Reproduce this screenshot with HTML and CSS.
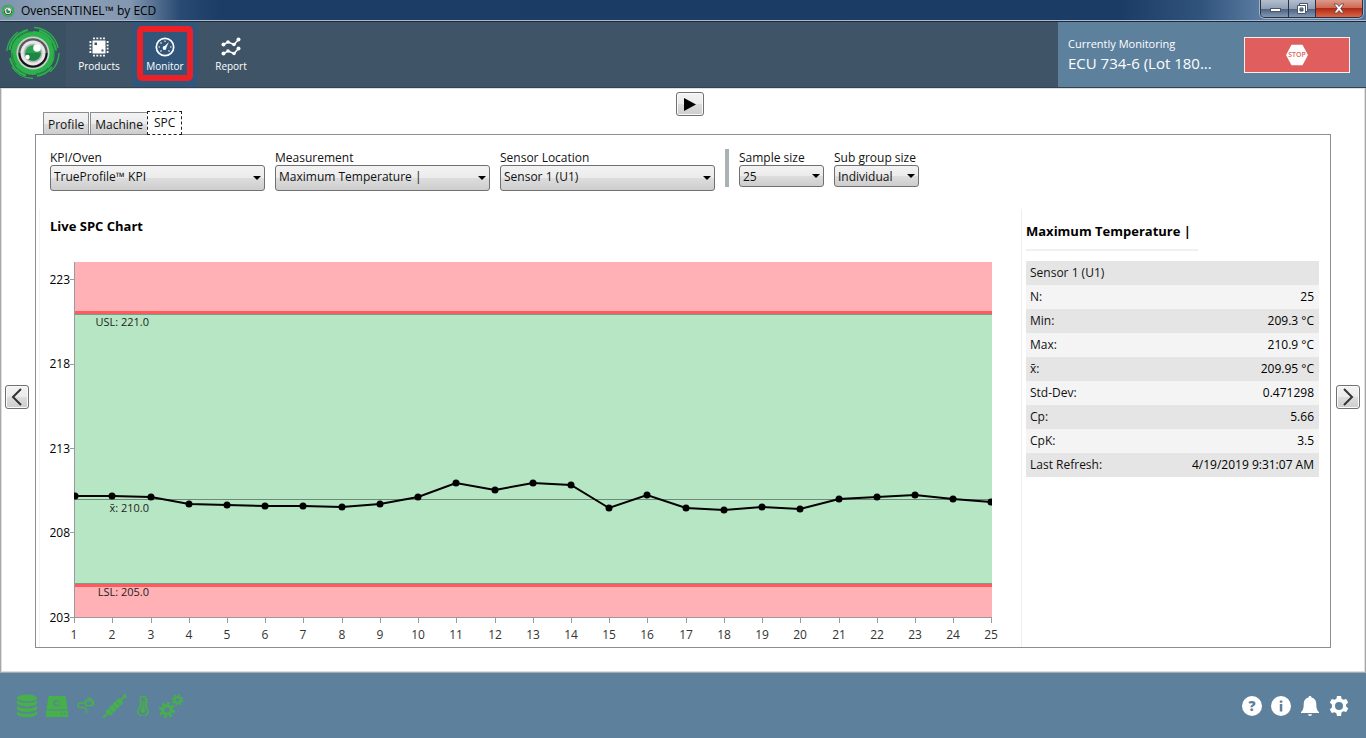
FILE: index.html
```html
<!DOCTYPE html>
<html lang="en">
<head>
<meta charset="utf-8">
<title>OvenSENTINEL™ by ECD</title>
<link rel="stylesheet" href="styles.css">
</head>
<body>
<div class="app">
  <header class="titlebar">
    <svg class="titlebar-icon" viewBox="0 0 54 54" aria-hidden="true"><use href="#logo"/></svg>
    <span class="titlebar-text">OvenSENTINEL™ by ECD</span>
    <div class="window-buttons">
      <button class="win-btn" aria-label="Minimize"><svg width="12" height="10" viewBox="0 0 12 10"><rect x="1.500" y="4.500" width="10" height="3" fill="#fff" stroke="#4a5568"/></svg></button>
      <button class="win-btn" aria-label="Restore"><svg width="14" height="12" viewBox="0 0 14 12"><path d="M4.500 .5h8v8h-2v-6h-6z" fill="#fff" stroke="#4a5568"/><path fill-rule="evenodd" d="M2.500 2.500h8v8h-8zM5 5v3h3V5z" fill="#fff" stroke="#4a5568"/></svg></button>
      <button class="win-btn win-close" aria-label="Close"><svg width="12" height="11" viewBox="0 0 12 11"><path d="M1 1h3l2 2.500L8 1h3L7.700 5.500 11 10H8L6 7.500 4 10H1l3.300-4.500z" fill="#fff" stroke="#5b4040" stroke-width=".8"/></svg></button>
    </div>
  </header>

  <div class="header">
    <div class="brand">
      <svg width="54" height="54" viewBox="0 0 54 54" role="img" aria-label="ECD">
        <defs>
          <g id="logo">
            <g fill="none" stroke="#2bb24a">
              <circle cx="27" cy="27" r="18.500" stroke-width="7"/>
              <path d="M28 1.500A25.500 25.500 0 0 1 52 22M53 27a26 26 0 0 1-9 19M27 52.500A25.500 25.500 0 0 1 6 41M.8 25A26 26 0 0 1 12 6" stroke-width="1.300"/>
              <path d="M33 4.500a23.500 23.500 0 0 1 17 20M46 41a23.500 23.500 0 0 1-15 9M20 49.500A23.500 23.500 0 0 1 4 32M3.500 24A23.500 23.500 0 0 1 22 4" stroke-width="2"/>
            </g>
            <g fill="none" stroke="#1e6f3a" stroke-width=".7"><path d="M12 12a21 21 0 0 1 15-6.500M46 17a21 21 0 0 1 2 15M10 39a21 21 0 0 1-4-12M30 48a21 21 0 0 0 12-6"/></g>
            <circle cx="27" cy="27" r="16.500" fill="#cfd1d1"/>
            <circle cx="27" cy="27" r="14.800" fill="#57595b"/>
            <path d="M12.500 27a14.500 14.500 0 0 0 29 0z" fill="#151617"/>
            <circle cx="27" cy="27" r="12.500" fill="#e6e8e8"/>
            <circle cx="27" cy="27" r="9.500" fill="#b4b8b9"/>
            <circle cx="27" cy="27" r="7.800" fill="#2aa253"/>
            <path d="M19.200 27a7.800 7.800 0 0 0 15.600 0z" fill="#1f8547"/>
            <circle cx="31" cy="22" r="3.800" fill="#fff"/>
            <circle cx="21.500" cy="31" r="2.200" fill="#fff"/>
          </g>
        </defs>
        <use href="#logo"/>
      </svg>
    </div>
    <nav class="nav">
      <button class="nav-item">
        <span class="nav-inner">
          <svg width="20" height="20" viewBox="0 0 20 20" aria-hidden="true"><path fill="#fff" fill-rule="evenodd" d="M3.500 3.500h13v13h-13zM5.500 5.500v2.500h2.500V5.500zM12.500 12.500v2h2v-2z"/><path stroke="#fff" stroke-width="1.800" d="M5 .5V2.300M8.300 .5V2.300M11.700 .5V2.300M15 .5V2.300M5 17.700v1.800M8.300 17.700v1.800M11.700 17.700v1.800M15 17.700v1.800M.5 5H2.300M.5 8.300H2.300M.5 11.700H2.300M.5 15H2.300M17.700 5h1.800M17.700 8.300h1.800M17.700 11.700h1.800M17.700 15h1.800"/></svg>
          <span>Products</span>
        </span>
      </button>
      <button class="nav-item nav-active" aria-current="page">
        <span class="nav-inner nav-marked">
          <svg width="20" height="20" viewBox="0 0 20 20" aria-hidden="true"><circle cx="10" cy="10" r="8.700" fill="none" stroke="#fff" stroke-width="1.700"/><path stroke="#fff" stroke-width="1.100" d="M10 3.500v1.500M5.500 5.500l1 1M3.500 10H5M15 10h1.500M5.500 14.500l1-1M14.500 14.500l-1-1"/><circle cx="9.500" cy="11" r="1.900" fill="#fff"/><path d="M8.500 10.200L14 5l-3.300 6.700z" fill="#fff"/></svg>
          <span>Monitor</span>
        </span>
      </button>
      <button class="nav-item">
        <span class="nav-inner">
          <svg width="20" height="20" viewBox="0 0 20 20" aria-hidden="true"><g fill="none" stroke="#fff" stroke-width="1.500"><path d="M2.500 7.500L7 5l6 2.500 4.500-5M2.500 16.500L7 14l6 2.500 4.500-5"/></g><g fill="#fff"><circle cx="2.500" cy="7.500" r="2"/><circle cx="7" cy="5" r="1.800"/><circle cx="13" cy="7.500" r="1.800"/><circle cx="17.500" cy="2.500" r="2"/><circle cx="2.500" cy="16.500" r="2"/><circle cx="7" cy="14" r="1.800"/><circle cx="13" cy="16.500" r="1.800"/><circle cx="17.500" cy="11.500" r="2"/></g></svg>
          <span>Report</span>
        </span>
      </button>
    </nav>
    <section class="monitoring">
      <div class="monitoring-text">
        <div class="monitoring-label">Currently Monitoring</div>
        <div class="monitoring-name">ECU 734-6 (Lot 180...</div>
      </div>
      <button class="stop-btn" aria-label="Stop">
        <svg width="22" height="22" viewBox="0 0 22 22"><path d="M5.500 .8h11L22 11l-5.500 10.200h-11L0 11z" fill="#fff"/><text x="11" y="13" class="stop-text">STOP</text></svg>
      </button>
    </section>
  </div>

  <main class="main">
    <button class="glass-btn play-btn" aria-label="Play"><svg width="14" height="14" viewBox="0 0 14 14"><path d="M1 1l12 6.500-12 6.500z"/></svg></button>
    <div class="tabs" role="tablist">
      <button class="tab" role="tab">Profile</button>
      <button class="tab" role="tab">Machine</button>
      <button class="tab tab-selected" role="tab" aria-selected="true">SPC</button>
    </div>
    <button class="glass-btn arrow-btn" aria-label="Previous"><svg width="12" height="18" viewBox="0 0 12 18"><path class="chevron" d="M10 1L2 9l8 8"/></svg></button>

    <section class="panel">
      <form class="filters">
        <div class="field">
          <label for="kpi">KPI/Oven</label>
          <div class="select-box"><select id="kpi" class="select"><option>TrueProfile™ KPI</option></select></div>
        </div>
        <div class="field">
          <label for="measurement">Measurement</label>
          <div class="select-box"><select id="measurement" class="select"><option>Maximum Temperature |</option></select></div>
        </div>
        <div class="field">
          <label for="sensor">Sensor Location</label>
          <div class="select-box"><select id="sensor" class="select"><option>Sensor 1 (U1)</option></select></div>
        </div>
        <div class="divider"></div>
        <div class="field field-small">
          <label for="sample">Sample size</label>
          <div class="select-box"><select id="sample" class="select"><option>25</option></select></div>
        </div>
        <div class="field field-small">
          <label for="subgroup">Sub group size</label>
          <div class="select-box"><select id="subgroup" class="select"><option>Individual</option></select></div>
        </div>
      </form>

      <div class="content">
        <div class="chart-col">
          <h2 class="chart-title">Live SPC Chart</h2>
          <svg class="chart" viewBox="0 0 952 386" role="img" aria-label="Live SPC Chart">
            <defs>
              <clipPath id="plot"><rect x="24" y="6" width="918" height="355"/></clipPath>
              <marker id="dot" viewBox="0 0 10 10" refX="5" refY="5" markerWidth="10" markerHeight="10" markerUnits="userSpaceOnUse"><circle cx="5" cy="5" r="3.500"/></marker>
            </defs>
            <rect x="24" y="6" width="918" height="355" fill="#ffb1b5"/>
            <rect x="24" y="57" width="918" height="271" fill="#b6e6c3"/>
            <rect x="24" y="55" width="918" height="3" fill="#ff5a5f"/>
            <rect x="24" y="58" width="918" height="1" fill="#74a083"/>
            <rect x="24" y="328" width="918" height="3" fill="#ff5a5f"/>
            <rect x="24" y="327" width="918" height="1" fill="#74a083"/>
            <path class="mean" d="M24 243.500H942"/>
            <path class="axis" d="M24.500 6V367M20 361.500H942M20 23.500h4M20 108.500h4M20 192.500h4M20 276.500h4M62.500 361v6M101.500 361v6M139.500 361v6M177.500 361v6M215.500 361v6M253.500 361v6M292.500 361v6M330.500 361v6M368.500 361v6M406.500 361v6M445.500 361v6M483.500 361v6M521.500 361v6M559.500 361v6M597.500 361v6M636.500 361v6M674.500 361v6M712.500 361v6M750.500 361v6M789.500 361v6M827.500 361v6M865.500 361v6M903.500 361v6M941.500 361v6"/>
            <g clip-path="url(#plot)">
              <polyline class="series" points="25,240 62,240 101,241 139,248 177,249 215,250 253,250 292,251 330,248 368,241 406,227 445,234 483,227 521,229 559,252 597,239 636,252 674,254 712,251 750,253 789,243 827,241 865,239 903,243 941,246"/>
            </g>
            <g class="y-labels">
              <text x="20" y="28">223</text><text x="20" y="112">218</text><text x="20" y="197">213</text><text x="20" y="281">208</text><text x="20" y="366">203</text>
            </g>
            <g class="line-labels">
              <text x="99" y="70">USL: 221.0</text><text x="99" y="256">x̄: 210.0</text><text x="99" y="340">LSL: 205.0</text>
            </g>
            <g class="x-labels">
              <text x="24" y="383">1</text><text x="62" y="383">2</text><text x="101" y="383">3</text><text x="139" y="383">4</text><text x="177" y="383">5</text><text x="215" y="383">6</text><text x="253" y="383">7</text><text x="292" y="383">8</text><text x="330" y="383">9</text><text x="368" y="383">10</text><text x="406" y="383">11</text><text x="445" y="383">12</text><text x="483" y="383">13</text><text x="521" y="383">14</text><text x="559" y="383">15</text><text x="597" y="383">16</text><text x="636" y="383">17</text><text x="674" y="383">18</text><text x="712" y="383">19</text><text x="750" y="383">20</text><text x="789" y="383">21</text><text x="827" y="383">22</text><text x="865" y="383">23</text><text x="903" y="383">24</text><text x="941" y="383">25</text>
            </g>
          </svg>
        </div>

        <aside class="stats">
          <h2 class="stats-title">Maximum Temperature |</h2>
          <div class="stats-rule"></div>
          <table class="stats-table">
            <tbody>
              <tr><th colspan="2" scope="colgroup">Sensor 1 (U1)</th></tr>
              <tr><th scope="row">N:</th><td>25</td></tr>
              <tr><th scope="row">Min:</th><td>209.3 °C</td></tr>
              <tr><th scope="row">Max:</th><td>210.9 °C</td></tr>
              <tr><th scope="row">x̄:</th><td>209.95 °C</td></tr>
              <tr><th scope="row">Std-Dev:</th><td>0.471298</td></tr>
              <tr><th scope="row">Cp:</th><td>5.66</td></tr>
              <tr><th scope="row">CpK:</th><td>3.5</td></tr>
              <tr><th scope="row">Last Refresh:</th><td>4/19/2019 9:31:07 AM</td></tr>
            </tbody>
          </table>
        </aside>
      </div>
    </section>

    <button class="glass-btn arrow-btn" aria-label="Next"><svg width="12" height="18" viewBox="0 0 12 18"><path class="chevron" d="M2 1l8 8-8 8"/></svg></button>
  </main>

  <footer class="footer">
    <div class="status-icons">
      <svg width="20" height="24" viewBox="0 0 20 24" aria-hidden="true"><ellipse cx="10" cy="4" rx="10" ry="3.600"/><path d="M0 6.200c3 3.400 17 3.400 20 0v3.600c-3 3.600-17 3.600-20 0zM0 11.800c3 3.400 17 3.400 20 0v3.400c-3 3.600-17 3.600-20 0zM0 17.200c3 3.400 17 3.400 20 0v3c-3 4-17 4-20 0z"/></svg>
      <svg width="22" height="22" viewBox="0 0 22 22" aria-hidden="true"><path d="M2.500 1h17l2 13.500H.5z"/><path fill-rule="evenodd" d="M0 15.500h22V22H0zM15 18v1.500h1.500V18zM18 18v1.500h1.500V18z"/><text class="drive-text" x="11" y="11">C:</text></svg>
      <svg width="17" height="17" viewBox="0 0 17 17" aria-hidden="true"><path class="cable" d="M8 6H3.500C.2 6 .2 10.500 3.500 10.500H6c3.500 0 3.500 2 3.500 6M8.700 3.500h6.600v5H8.700zM15.300 4.500h1v3h-1M11 3.500v-2h3v2"/></svg>
      <svg width="24" height="24" viewBox="0 0 24 24" aria-hidden="true"><path d="M2.500 17.500L16 4l4.500 4.500L7 22z"/><path stroke="#46b04a" stroke-width="2" d="M0 24l5-5M18 6l5-5M20.500 .8l2.700 2.700"/><path stroke="#5d809d" stroke-width="1" d="M6.500 15l3.500 3.500M10 11.500l3.500 3.500M13.500 8l3.500 3.500"/></svg>
      <svg width="14" height="20" viewBox="-1 0 14 20" aria-hidden="true"><path fill="none" stroke="#46b04a" stroke-width="1.600" d="M3.500 11V1h5v10a5 5 0 1 1-5 0z"/><circle cx="6" cy="14.500" r="2.400"/><path stroke="#46b04a" stroke-width="1.400" d="M6 5v8M8 3.500h3M8 6.500h3M8 9.500h3"/></svg>
      <svg width="25" height="24" viewBox="0 0 25 24" aria-hidden="true"><circle cx="8" cy="16" r="4.300" fill="none" stroke="#46b04a" stroke-width="3"/><circle cx="8" cy="16" r="6.800" fill="none" stroke="#46b04a" stroke-width="2.600" stroke-dasharray="2.700 2.640"/><circle cx="18.500" cy="6" r="3" fill="none" stroke="#46b04a" stroke-width="2"/><circle cx="18.500" cy="6" r="4.800" fill="none" stroke="#46b04a" stroke-width="2" stroke-dasharray="1.900 1.870"/></svg>
    </div>
    <div class="tools">
      <button class="tool" aria-label="Help"><svg width="20" height="20" viewBox="0 0 20 20"><circle cx="10" cy="10" r="10"/><text class="help-text" x="10" y="15">?</text></svg></button>
      <button class="tool" aria-label="Information"><svg width="20" height="20" viewBox="0 0 20 20"><circle cx="10" cy="10" r="10"/><path fill="#5d809d" d="M8.800 4.500h2.500v2.200H8.800zM8.800 8h2.500v7.500H8.800z"/></svg></button>
      <button class="tool" aria-label="Notifications"><svg width="20" height="20" viewBox="0 0 20 20"><path d="M10 0a1.500 1.500 0 0 1 1.500 1.600c3 .7 4.800 3 4.800 6.400 0 5 1 6.500 2.700 8V17H1v-1c1.700-1.500 2.700-3 2.700-8 0-3.400 1.800-5.700 4.800-6.400A1.500 1.500 0 0 1 10 0zM8 18.200h4a2 1.800 0 0 1-4 0z"/></svg></button>
      <button class="tool" aria-label="Settings"><svg width="20" height="20" viewBox="0 0 20 20"><path fill-rule="evenodd" d="M8 0h4l.6 2.700 1.900 1.100 2.700-.8 2 3.500-2.100 1.900v2.200l2.100 2-2 3.400-2.700-.8-1.900 1.100L12 20H8l-.6-2.700-1.900-1.100-2.700.8-2-3.400 2.100-2V8.400L.8 6.500l2-3.500 2.700.8 1.900-1.100zM10 6a4 4 0 1 0 0 8 4 4 0 0 0 0-8z"/></svg></button>
    </div>
  </footer>
</div>
</body>
</html>
```
FILE: styles.css
```css
* { box-sizing: border-box; }

body {
  margin: 0;
  font-family: "Open Sans", "Noto Sans", sans-serif;
  font-size: 12px;
  line-height: 16px;
  color: #111;
}

button, select { font: inherit; color: inherit; }
button { padding: 0; border: 0; background: none; }
svg { display: block; }

.app { display: flex; flex-direction: column; min-height: 100vh; }

.titlebar {
  display: flex;
  align-items: center;
  height: 22px;
  padding-left: 1px;
  border-bottom: 1px solid #1e2a3c;
  box-shadow: inset 0 -1px #a9bad0;
  background: linear-gradient(90deg, #7f95ae 0, #8ea1b8 60px, #8297b0 130px, #294a72 180px, #1b3d66 220px, #1b3c65 82%, #31547d 88%, #6283a8 93%, #55759b 100%);
}
.titlebar-icon { width: 14px; height: 14px; }
.titlebar-text { flex: 1; padding-left: 6px; color: #000; }

.window-buttons {
  display: flex;
  align-self: flex-start;
  height: 18px;
  margin-right: 3px;
  border: 1px solid #2a3242;
  border-top: 0;
  border-radius: 0 0 5px 5px;
  overflow: hidden;
  box-shadow: 0 0 0 1px #a3b3c8;
}
.win-btn {
  display: flex;
  align-items: center;
  justify-content: center;
  width: 27px;
  background: linear-gradient(#b3bfcf 0, #8f9fb5 50%, #4a607e 51%, #8498b4 100%);
}
.win-btn + .win-btn { border-left: 1px solid #2a3242; }
.win-close { width: 47px; background: linear-gradient(#dd9a8a 0, #cd6a56 45%, #b32a12 50%, #d8664a 100%); }

.header { display: flex; height: 66px; border-bottom: 1px solid #2f4354; background: #3f5567; }
.brand { display: flex; align-items: center; width: 66px; padding: 0 0 3px 6px; background: #3a5063; }
.nav { display: flex; flex: 1; }
.nav-item { width: 66px; color: #fff; font-size: 10px; font-weight: 500; line-height: 14px; }
.nav-active { background: #32567a; }
.nav-inner {
  display: flex;
  flex-direction: column;
  align-items: center;
  gap: 2px;
  height: 55px;
  margin: 0 5px 2px;
  padding-top: 5px;
  border: 6px solid transparent;
  border-radius: 5px;
}
.nav-marked { border-color: #ed2028; }

.monitoring {
  display: flex;
  align-items: center;
  justify-content: space-between;
  width: 308px;
  padding: 0 16px 0 10px;
  background: #5d809d;
  color: #fff;
}
.monitoring-label { font-size: 11px; }
.monitoring-name { font-size: 15px; line-height: 22px; }
.stop-btn {
  display: flex;
  align-items: center;
  justify-content: center;
  width: 106px;
  height: 36px;
  border: 1px solid #f5efec;
  background: #e05f5e;
}
.stop-text { font-size: 7px; font-weight: 600; fill: #e05f5e; text-anchor: middle; }

.main {
  flex: 1;
  display: grid;
  grid-template-columns: 31px 1fr 34px;
  grid-template-rows: 46px 1fr;
  padding-bottom: 12px;
  border: 1px solid #a9a9a9;
  border-top-width: 0;
  box-shadow: inset 0 0 0 1px #dedede;
  background: #fff;
}

.glass-btn {
  display: flex;
  align-items: center;
  justify-content: center;
  border: 1px solid #707070;
  border-radius: 3px;
  background: linear-gradient(#f3f3f3 0, #ebebeb 50%, #dddddd 51%, #cdcdcd 100%);
  box-shadow: inset 0 0 0 1px #fafafa;
}
.play-btn { grid-area: 1 / 1 / 2 / 4; justify-self: center; width: 28px; height: 24px; margin: 4px 0 0 14px; }
.arrow-btn { grid-row: 2; place-self: center; width: 24px; height: 24px; }
.chevron { fill: none; stroke: #333; stroke-width: 2; }

.tabs { grid-area: 1 / 2; display: flex; align-items: flex-end; align-self: end; justify-self: start; padding-left: 11px; }
.tab {
  height: 22px;
  margin-right: 1px;
  padding: 2px 4px 0;
  border: 1px solid #8c8e94;
  border-bottom: 0;
  background: linear-gradient(#f3f3f3 0, #ebebeb 50%, #dddddd 51%, #cdcdcd 100%);
}
.tab-selected {
  position: relative;
  height: 24px;
  margin: 0 0 -1px -2px;
  padding: 0 6px;
  border: 1px dashed #222;
  background: #fff;
}

.panel {
  grid-area: 2 / 2;
  display: flex;
  flex-direction: column;
  margin: 0 0 12px 3px;
  border: 1px solid #8c8e94;
}

.filters { display: flex; align-items: flex-start; gap: 10px; padding: 14px 14px 18px; }
.field { width: 215px; }
.field label { display: block; height: 16px; line-height: 18px; }
.field-small { width: 85px; }
.select-box { position: relative; }
.select-box::after {
  content: "";
  position: absolute;
  top: 11px;
  right: 4px;
  border: 4px solid transparent;
  border-top-color: #000;
  border-bottom-width: 0;
  pointer-events: none;
}
.select {
  display: block;
  appearance: none;
  width: 100%;
  height: 26px;
  padding: 0 3px 2px;
  border: 1px solid #707070;
  border-radius: 3px;
  background: linear-gradient(#f3f3f3 0, #ebebeb 50%, #dddddd 51%, #cdcdcd 100%);
}
.field-small .select { height: 22px; padding: 2px 3px 0; }
.field-small .select-box::after { top: 9px; }
.divider { width: 4px; height: 38px; background: #aab2b5; }

.content { flex: 1; display: flex; margin-left: 3px; border-left: 1px solid #f3f3f3; }
.chart-col { flex: 1; padding: 8px 19px 0 10px; }
.chart-title, .stats-title { margin: 0; font-size: 13px; font-weight: 700; line-height: 18px; color: #000; }
.chart { width: 100%; height: auto; margin-top: 21px; font-size: 12px; }
.mean { stroke: #6d8a76; }
.axis { fill: none; stroke: #9a9a9a; }
.series { fill: none; stroke: #000; stroke-width: 2; marker: url(#dot); }
.y-labels { text-anchor: end; }
.x-labels { text-anchor: middle; fill: #333; }
.line-labels { text-anchor: end; fill: #222; font-size: 11px; }

.stats { width: 309px; padding: 13px 11px 0 4px; border-left: 1px solid #efefef; }
.stats-rule { width: 172px; height: 12px; margin-top: 9px; border-top: 2px solid #f0f0f0; }
.stats-table { width: 100%; border-collapse: collapse; }
.stats-table th, .stats-table td { height: 24px; padding: 0 5px 0 4px; font-weight: 400; text-align: left; background: #f4f4f4; }
.stats-table tr:nth-child(odd) > * { background: #e5e5e5; }
.stats-table td { text-align: right; color: #000; }

.footer {
  display: flex;
  align-items: center;
  justify-content: space-between;
  height: 65px;
  padding: 0 17px;
  background: #5d809d;
}
.status-icons { display: flex; align-items: center; gap: 9px; fill: #46b04a; }
.cable { fill: none; stroke: #46b04a; stroke-width: 1.4; }
.drive-text { font-size: 9px; font-weight: 700; fill: #5d809d; text-anchor: middle; }
.tools { display: flex; gap: 9px; fill: #fff; }
.help-text { font-size: 14px; font-weight: 800; fill: #5d809d; text-anchor: middle; }
```
